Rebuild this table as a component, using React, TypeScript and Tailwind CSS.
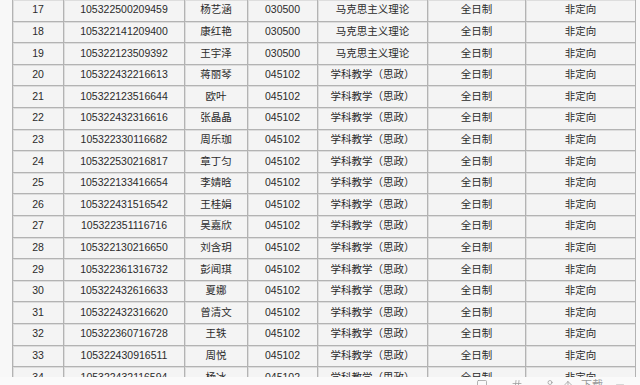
import React from 'react';
import { Square, Hash, User, ArrowUp, Minus } from 'lucide-react';

type Row = {
  no: number;
  id: string;
  name: string;
  code: string;
  major: string;
};

const MAKE = '马克思主义理论';
const JIAO = '学科教学（思政）';

const rows: Row[] = [
  { no: 17, id: '105322500209459', name: '杨艺涵', code: '030500', major: MAKE },
  { no: 18, id: '105322141209400', name: '康红艳', code: '030500', major: MAKE },
  { no: 19, id: '105322123509392', name: '王宇泽', code: '030500', major: MAKE },
  { no: 20, id: '105322432216613', name: '蒋丽琴', code: '045102', major: JIAO },
  { no: 21, id: '105322123516644', name: '欧叶', code: '045102', major: JIAO },
  { no: 22, id: '105322432316616', name: '张晶晶', code: '045102', major: JIAO },
  { no: 23, id: '105322330116682', name: '周乐珈', code: '045102', major: JIAO },
  { no: 24, id: '105322530216817', name: '章丁匀', code: '045102', major: JIAO },
  { no: 25, id: '105322133416654', name: '李婧晗', code: '045102', major: JIAO },
  { no: 26, id: '105322431516542', name: '王桂娟', code: '045102', major: JIAO },
  { no: 27, id: '105322351116716', name: '吴嘉欣', code: '045102', major: JIAO },
  { no: 28, id: '105322130216650', name: '刘含玥', code: '045102', major: JIAO },
  { no: 29, id: '105322361316732', name: '彭闻琪', code: '045102', major: JIAO },
  { no: 30, id: '105322432616633', name: '夏娜', code: '045102', major: JIAO },
  { no: 31, id: '105322432316620', name: '曾清文', code: '045102', major: JIAO },
  { no: 32, id: '105322360716728', name: '王轶', code: '045102', major: JIAO },
  { no: 33, id: '105322430916511', name: '周悦', code: '045102', major: JIAO },
  { no: 34, id: '105322432116594', name: '杨冰', code: '045102', major: JIAO },
];

const Cell: React.FC<{ w: string; children: React.ReactNode }> = ({ w, children }) => (
  <div
    className={`${w} shrink-0 h-full flex items-center justify-center border-r border-b border-[#b3b3b3] shadow-[inset_1px_1px_0_#dddddd] whitespace-nowrap`}
  >
    {children}
  </div>
);

export default function App() {
  return (
    <div
      className="w-[640px] h-[385px] overflow-hidden bg-[#f8f8f8] flex flex-col text-[#2b2b2b] text-[10.5px]"
      style={{ fontFamily: '"Liberation Sans", "Noto Sans CJK SC", sans-serif' }}
    >
      {/* Table body (scrolled) */}
      <div className="flex-1 overflow-hidden pl-[12px]">
        <div className="w-[623px] border-l border-t border-[#b3b3b3] bg-[#f4f4f4] -mt-[1px]">
          {rows.map((r) => (
            <div key={r.no} className="flex h-[21.6px]">
              <Cell w="w-[51px]">{r.no}</Cell>
              <Cell w="w-[121px]">{r.id}</Cell>
              <Cell w="w-[63px]">{r.name}</Cell>
              <Cell w="w-[70px]">{r.code}</Cell>
              <Cell w="w-[110px]">{r.major}</Cell>
              <Cell w="w-[98px]">全日制</Cell>
              <Cell w="w-[110px]">非定向</Cell>
            </div>
          ))}
        </div>
      </div>

      {/* Bottom toolbar, mostly cut off */}
      <div className="h-[8px] shrink-0 overflow-hidden bg-[#fafafa] flex justify-end pr-[14px] text-[#9a9a9a]">
        <div className="flex items-start pt-[2px]">
          <Square size={12} strokeWidth={1.5} />
          <Hash size={12} strokeWidth={1.5} className="ml-[23px]" />
          <User size={12} strokeWidth={1.5} className="ml-[21px]" />
          <ArrowUp size={12} strokeWidth={1.5} className="ml-[6px]" />
          <span className="ml-[7px] text-[11px] leading-[12px]">下载</span>
          <Minus size={12} strokeWidth={1.5} className="ml-[11px]" />
        </div>
      </div>
    </div>
  );
}
